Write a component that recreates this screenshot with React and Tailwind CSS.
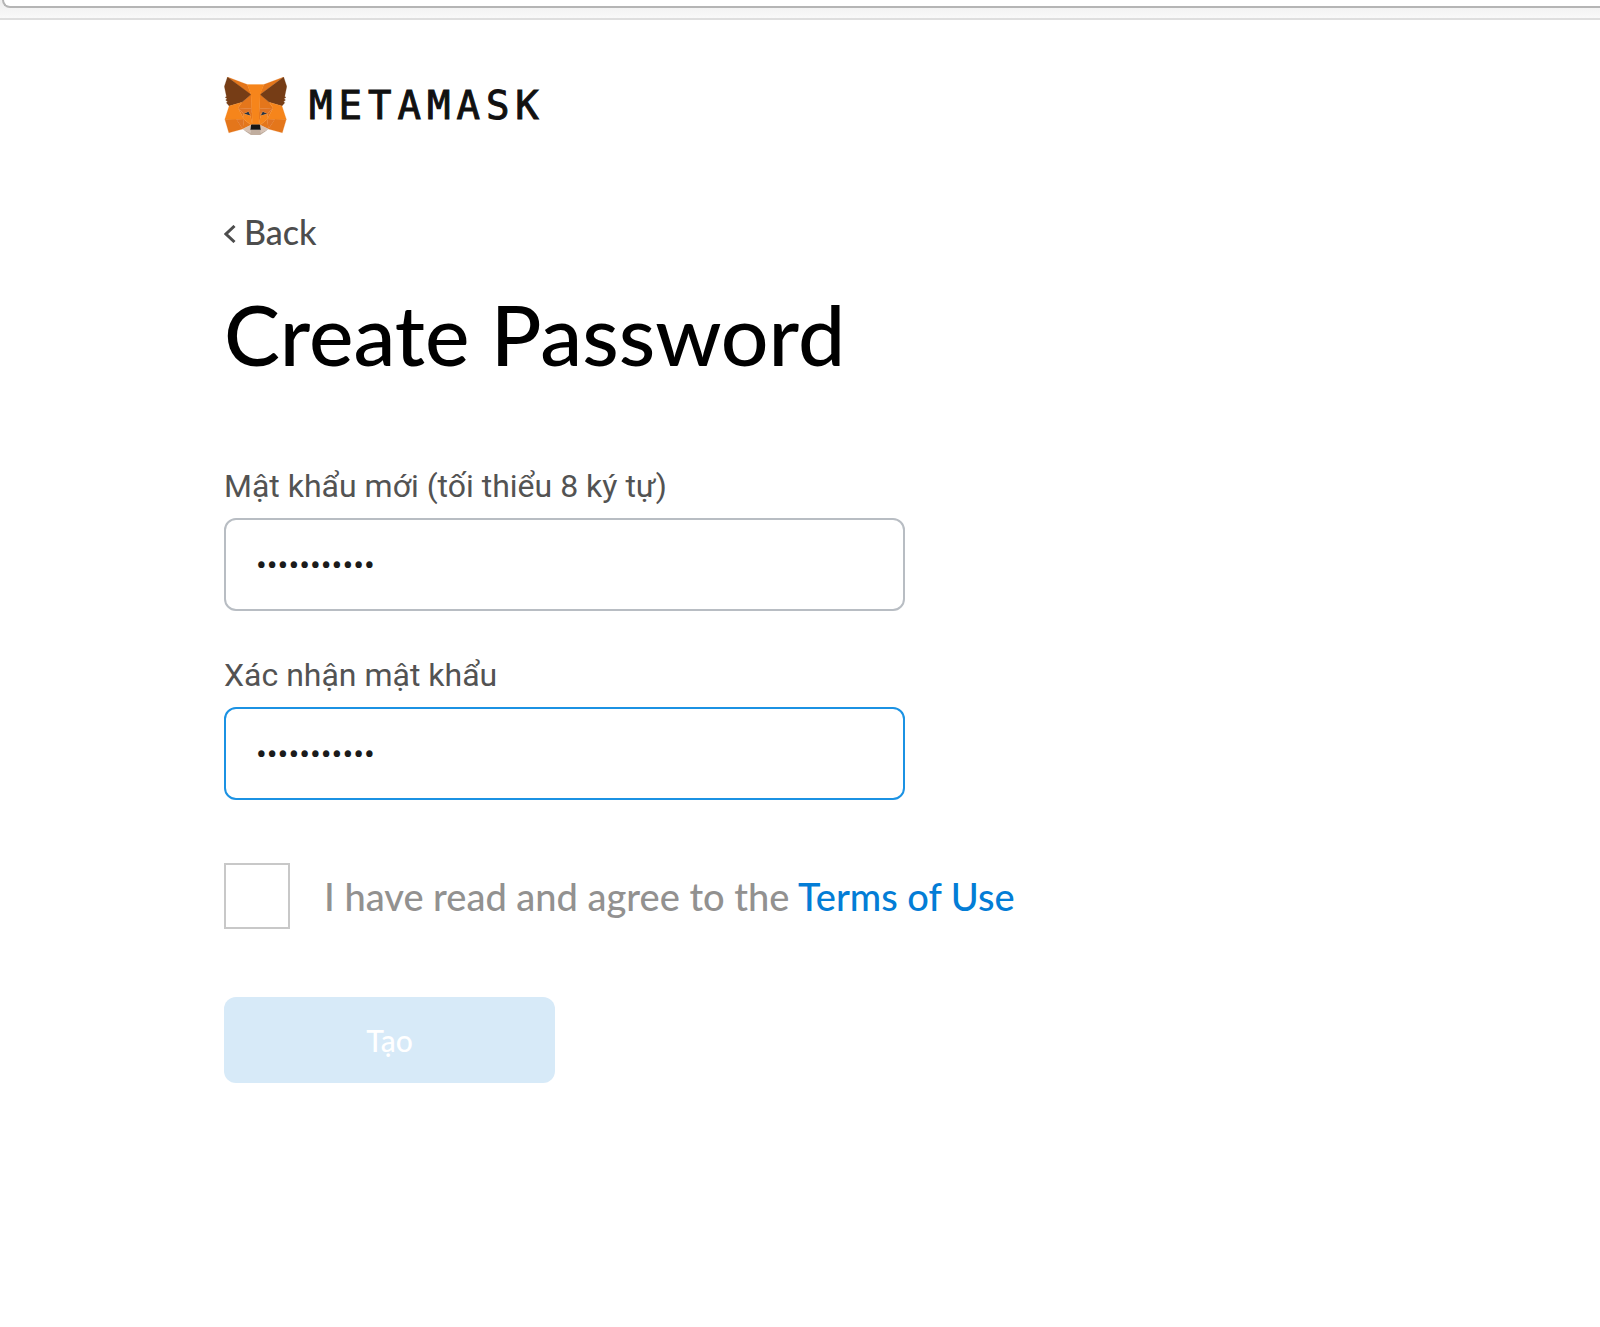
import React, { useState } from 'react';

const FoxLogo = () => (
    <svg viewBox="31 35 256 237" className="w-[63px] h-[58px] shrink-0" aria-hidden="true">
        {/* Forehead and cheeks */}
        <g fill="#e4761b" stroke="#e4761b" strokeLinejoin="round">
            <path d="M274.1 35.5l-99.5 73.9L193 65.8z" />
            <path d="M44.4 35.5l98.7 74.6-17.5-44.3z" />
            <path d="M238.3 206.8l-26.5 40.6 56.7 15.6 16.3-55.3z" />
            <path d="M33.9 207.7L50.1 263l56.7-15.6-26.5-40.6z" />
            <path d="M103.6 138.2l-15.8 23.9 56.3 2.5-2-60.5z" />
            <path d="M214.9 138.2l-39-34.8-1.3 61.2 56.2-2.5z" />
            <path d="M106.8 247.4l33.8-16.5-29.2-22.8z" />
            <path d="M177.9 230.9l33.9 16.5-4.7-39.3z" />
        </g>
        <g fill="#d7c1b3" stroke="#d7c1b3" strokeLinejoin="round">
            <path d="M211.8 247.4l-33.9-16.5 2.7 22.1-.3 9.3z" />
            <path d="M106.8 247.4l31.5 14.9-.2-9.3 2.5-22.1z" />
        </g>
        {/* Eyes */}
        <g fill="#233447" stroke="#233447" strokeLinejoin="round">
            <path d="M138.8 193.5l-28.2-8.3 19.9-9.1z" />
            <path d="M179.7 193.5l8.3-17.4 20 9.1z" />
        </g>
        <g fill="#e07423" stroke="#e07423" strokeLinejoin="round">
            <path d="M106.8 247.4l4.8-40.6-31.3.9z" />
            <path d="M207 206.8l4.8 40.6 26.5-39.7z" />
            <path d="M230.8 162.1l-56.2 2.5 5.2 28.9 8.3-17.4 20 9.1z" />
            <path d="M110.6 185.2l20-9.1 8.2 17.4 5.3-28.9-56.3-2.5z" />
        </g>
        <g fill="#e4751f" stroke="#e4751f" strokeLinejoin="round">
            <path d="M87.8 162.1l23.6 46-.8-22.9z" />
            <path d="M208.1 185.2l-1 22.9 23.7-46z" />
            <path d="M144.1 164.6l-5.3 28.9 6.6 34.1 1.5-44.9z" />
            <path d="M174.6 164.6l-2.7 18 1.2 45 6.7-34.1z" />
        </g>
        <g fill="#f6851b" stroke="#f6851b" strokeLinejoin="round">
            <path d="M179.8 193.5l-6.7 34.1 4.8 3.3 29.2-22.8 1-22.9z" />
            <path d="M110.6 185.2l.8 22.9 29.2 22.8 4.8-3.3-6.6-34.1z" />
        </g>
        {/* Chin and nose */}
        <path
            fill="#c0ad9e"
            d="M180.3 262.3l.3-9.3-2.5-2.2h-37.7l-2.3 2.2.2 9.3-31.5-14.9 11 9 22.3 15.5h38.3l22.4-15.5 11-9z"
        />
        <path fill="#161616" d="M177.9 230.9l-4.8-3.3h-27.7l-4.8 3.3-2.5 22.1 2.3-2.2h37.7l2.5 2.2z" />
        {/* Ears */}
        <g fill="#763d16" stroke="#763d16" strokeLinejoin="round">
            <path d="M278.3 114.2l8.5-40.8-12.7-37.9-96.2 71.4 37 31.3 52.3 15.3 11.6-13.5-5-3.6 8-7.3-6.2-4.8 8-6.1z" />
            <path d="M31.8 73.4l8.5 40.8-5.4 4 8 6.1-6.1 4.8 8 7.3-5 3.6 11.5 13.5 52.3-15.3 37-31.3-96.2-71.4z" />
        </g>
        <g fill="#f6851b" stroke="#f6851b" strokeLinejoin="round">
            <path d="M267.2 153.5l-52.3-15.3 15.9 23.9-23.7 46 31.2-.4h46.5z" />
            <path d="M103.6 138.2l-52.3 15.3-17.4 54.2h46.4l31.1.4-23.6-46z" />
            <path d="M174.6 164.6l3.3-57.7 15.2-41.1h-67.5l15 41.1 3.5 57.7 1.2 18.2.1 44.8h27.7l.2-44.8z" />
        </g>
    </svg>
);

const PasswordField = ({ id, label, value, onChange, active }) => (
    <div className="flex flex-col gap-3 font-['Roboto',sans-serif] text-[32px] font-normal">
        <label htmlFor={id} className="leading-10 text-[#535353]">
            {label}
        </label>
        <input
            id={id}
            type="password"
            value={value}
            onChange={(e) => onChange(e.target.value)}
            className={`h-[93px] w-full rounded-xl border-2 bg-white px-[30px] text-[#1b1b1b] outline-none ${
                active ? 'border-[#1b92e3]' : 'border-[#b8bdc3]'
            }`}
        />
    </div>
);

const App = () => {
    const [password, setPassword] = useState('metamask123');
    const [confirm, setConfirm] = useState('metamask123');
    const [agreed, setAgreed] = useState(false);

    return (
        <div className="min-h-screen bg-white font-['Lato',sans-serif] font-medium">
            {/* Bottom edge of the browser toolbar */}
            <div className="h-5 border-b-2 border-[#dedede] bg-linear-to-b from-[#eeeeee] to-[#f9f9f9] pl-[2px]">
                <div className="h-2 rounded-bl-lg border-b-2 border-l-2 border-[#b5b5b5] bg-white"></div>
            </div>

            <main className="px-56 pt-14 pb-16">
                <div className="flex items-center gap-[22px]">
                    <FoxLogo />
                    <span className="font-['DejaVu_Sans_Mono',monospace] text-[39px] leading-[60px] font-normal tracking-[6px] text-[#111111] [-webkit-text-stroke:1px]">
                        METAMASK
                    </span>
                </div>

                <a href="#back" className="mt-[76px] flex w-fit items-center gap-2 text-[34px] leading-10 text-[#4d4d4d]">
                    <svg viewBox="0 0 12 18" className="mt-1 h-[18px] w-3" fill="none" stroke="currentColor" strokeWidth="3" aria-hidden="true">
                        <path d="M10.5 1L2 9l8.500 8" />
                    </svg>
                    Back
                </a>

                <h1 className="mt-[34px] text-[84px] leading-[96px] text-black">Create Password</h1>

                <form className="mt-[84px]" onSubmit={(e) => e.preventDefault()}>
                    <div className="flex max-w-[681px] flex-col gap-11">
                        <PasswordField
                            id="new-password"
                            label="Mật khẩu mới (tối thiểu 8 ký tự)"
                            value={password}
                            onChange={setPassword}
                        />
                        <PasswordField
                            id="confirm-password"
                            label="Xác nhận mật khẩu"
                            value={confirm}
                            onChange={setConfirm}
                            active
                        />
                    </div>

                    <div className="mt-[63px] flex items-center gap-[34px]">
                        <input
                            id="terms"
                            type="checkbox"
                            checked={agreed}
                            onChange={(e) => setAgreed(e.target.checked)}
                            className="size-[66px] shrink-0 appearance-none border-2 border-[#c8c8c8] bg-white checked:bg-[#1b92e3]"
                        />
                        <label htmlFor="terms" className="text-[38px] leading-[48px] text-[#929190]">
                            I have read and agree to the{' '}
                            <a href="#terms-of-use" className="text-[#037dd6]">
                                Terms of Use
                            </a>
                        </label>
                    </div>

                    <button
                        type="submit"
                        disabled={!agreed}
                        className="mt-[68px] h-[86px] w-[331px] rounded-xl bg-[#037dd6] text-[30px] text-white disabled:bg-[#d7eaf8]"
                    >
                        Tạo
                    </button>
                </form>
            </main>
        </div>
    );
};

export default App;
